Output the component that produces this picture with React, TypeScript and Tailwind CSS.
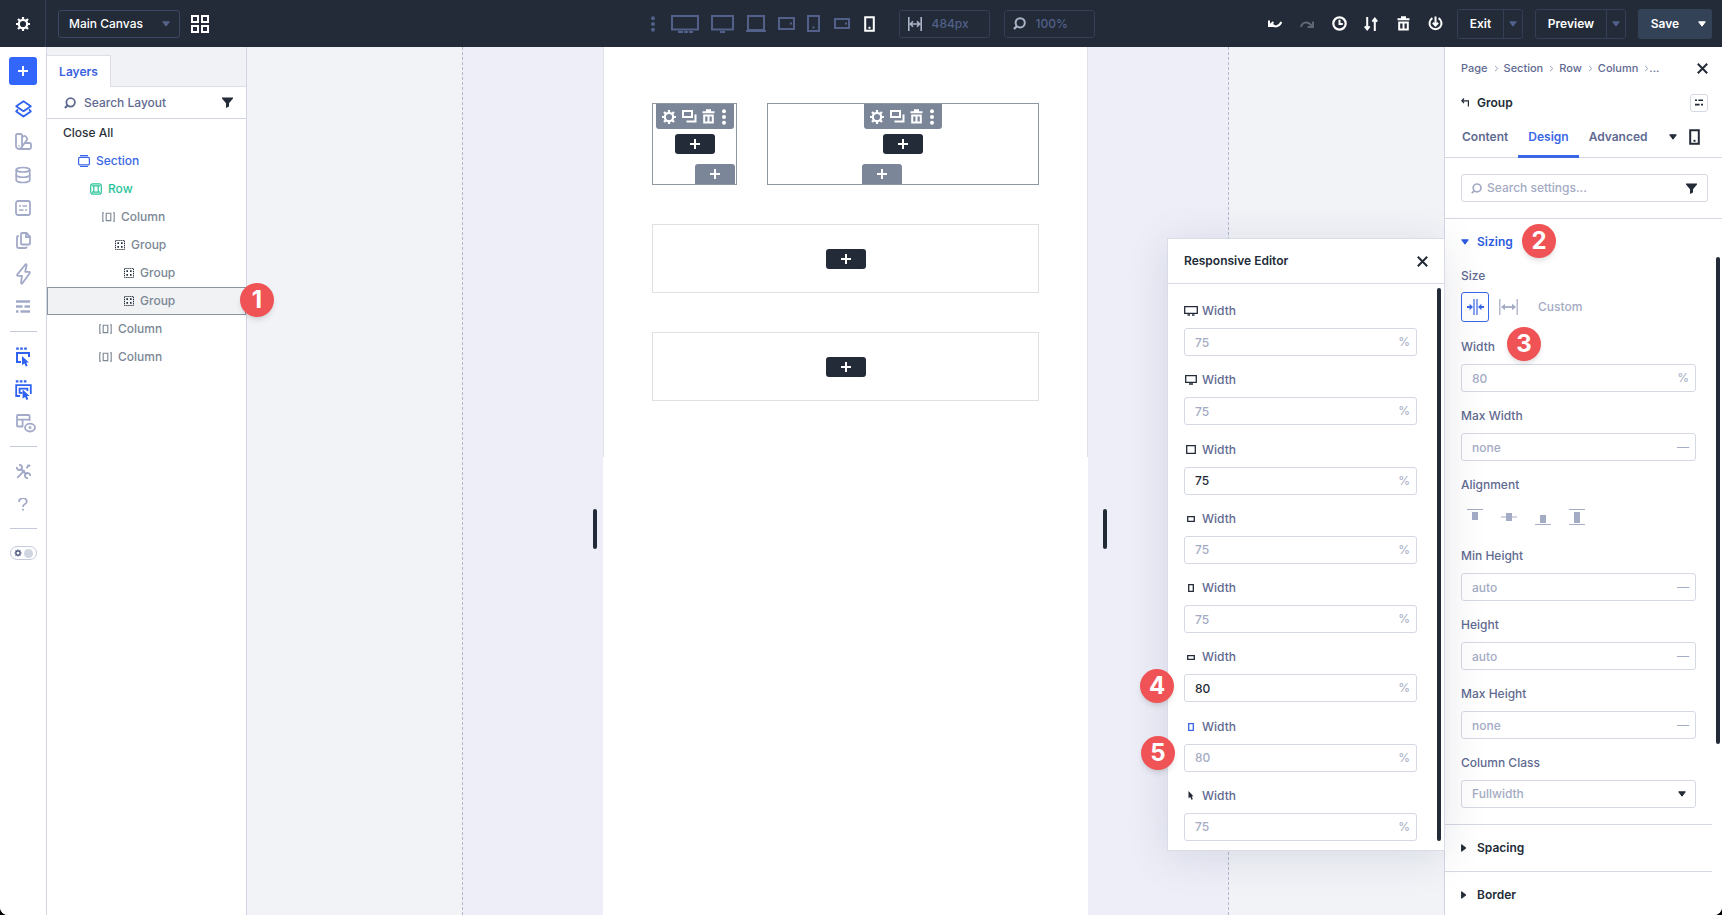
import React, { useState } from 'react';
import { Database } from 'lucide-react';

type DeviceKind = 'ultra' | 'desktop' | 'laptop' | 'tabletWide' | 'tablet' | 'phoneWide' | 'phone';

const devices: Record<DeviceKind, { w: number; h: number; body: React.ReactNode }> = {
  ultra: { w: 28, h: 18, body: <><path d="M1 1H27V14.5H1Z" /><path d="M7 17H12M13 17H17M18 17H22" /></> },
  desktop: { w: 23, h: 18, body: <><path d="M1 1H22V14.5H1Z" /><path d="M9 17H14" /></> },
  laptop: { w: 20, h: 17, body: <><path d="M2 1H18V15H2Z" /><path d="M0 16H20" /></> },
  tabletWide: { w: 17, h: 13, body: <><path d="M1 1H16V12H1Z" /><path d="M12 6.5H14" /></> },
  tablet: { w: 13, h: 17, body: <><path d="M1 1H12V16H1Z" /><path d="M5.5 12.5H7.5" /></> },
  phoneWide: { w: 16, h: 11, body: <><path d="M1 1H15V10H1Z" /><path d="M11 5.5H13" /></> },
  phone: { w: 11, h: 16, body: <><path d="M1.2 1.2H9.8V14.8H1.2Z" /><path d="M4.5 11.8H6.5" /></> },
};

const smallDevices: Record<DeviceKind, { w: number; h: number; d: string }> = {
  ultra: { w: 14, h: 10, d: 'M0.7 0.7H13.3V7.3H0.7ZM3.5 9H6M8 9H10.5' },
  desktop: { w: 12, h: 10, d: 'M0.7 0.7H11.3V7.3H0.7ZM4 9H8' },
  laptop: { w: 10, h: 9, d: 'M0.7 0.7H9.3V8.3H0.7Z' },
  tabletWide: { w: 8, h: 6, d: 'M0.7 0.7H7.3V5.3H0.7Z' },
  tablet: { w: 6, h: 8, d: 'M0.7 0.7H5.3V7.3H0.7Z' },
  phoneWide: { w: 8, h: 5, d: 'M0.7 0.7H7.3V4.3H0.7Z' },
  phone: { w: 6, h: 8, d: 'M0.7 0.7H5.3V7.3H0.7Z' },
};

function DeviceIcon({ kind }: { kind: DeviceKind }) {
  const { w, h, body } = devices[kind];
  return (
    <svg width={w} height={h} viewBox={`0 0 ${w} ${h}`} fill="none" stroke="currentColor" strokeWidth="2">
      {body}
    </svg>
  );
}

function SmallDeviceIcon({ kind }: { kind: DeviceKind }) {
  const { w, h, d } = smallDevices[kind];
  return (
    <svg width={w} height={h} viewBox={`0 0 ${w} ${h}`} fill="none" stroke="currentColor" strokeWidth="1.3">
      <path d={d} />
    </svg>
  );
}

function Gear({ size = 16 }: { size?: number }) {
  return (
    <svg width={size} height={size} viewBox="0 0 16 16" fill="none" stroke="currentColor" strokeWidth="2.2">
      <circle cx="8" cy="8" r="4.2" />
      <path d="M8 1V3.4M8 12.6V15M1 8H3.4M12.6 8H15M3 3L4.8 4.8M11.2 11.2L13 13M13 3L11.2 4.8M4.8 11.2L3 13" />
    </svg>
  );
}

function SearchIcon({ size = 13 }: { size?: number }) {
  return (
    <svg width={size} height={size} viewBox="0 0 13 13" fill="none" stroke="currentColor" strokeWidth="2">
      <circle cx="7.2" cy="5.8" r="4.6" />
      <path d="M4 9L1 12" strokeWidth="2.4" />
    </svg>
  );
}

function Trash() {
  return (
    <svg width="13" height="15" viewBox="0 0 13 15" fill="none" stroke="currentColor" strokeWidth="2">
      <path d="M0.5 3.2H12.5M4 1.2H9M2.2 6.5H10.8V13.4H2.2ZM6.5 6V13.6" />
    </svg>
  );
}

function Plus() {
  return (
    <svg width="10" height="10" viewBox="0 0 10 10" stroke="currentColor" strokeWidth="2">
      <path d="M5 0V10M0 5H10" />
    </svg>
  );
}

function Caret({ dir = 'down' }: { dir?: 'down' | 'right' }) {
  return (
    <svg width="8" height="8" viewBox="0 0 8 8" fill="currentColor" stroke="currentColor" strokeLinejoin="round">
      <path d={dir === 'down' ? 'M0.7 1.8H7.3L4 6.2Z' : 'M0.6 0.7V7.3L4.9 4Z'} />
    </svg>
  );
}

function Funnel() {
  return (
    <svg width="11" height="11" viewBox="0 0 11 11" fill="currentColor">
      <path d="M0 0.5H11V1.4L7 6.2V9.4L4 11V6.2L0 1.4Z" />
    </svg>
  );
}

function Cross() {
  return (
    <svg width="11" height="11" viewBox="0 0 11 11" stroke="currentColor" strokeWidth="2">
      <path d="M0.8 0.8L10.2 10.2M10.2 0.8L0.8 10.2" />
    </svg>
  );
}

function Kebab() {
  return (
    <svg width="4" height="16" viewBox="0 0 4 16" fill="currentColor">
      <circle cx="2" cy="2.2" r="2" />
      <circle cx="2" cy="8" r="2" />
      <circle cx="2" cy="13.8" r="2" />
    </svg>
  );
}

function Badge({ n, className }: { n: number; className: string }) {
  return (
    <span
      className={`absolute z-20 flex h-[34px] w-[34px] items-center justify-center rounded-full bg-[#f05355] text-2xl leading-none font-bold text-white shadow-md ${className}`}
    >
      {n}
    </span>
  );
}

const headerActions = [
  {
    label: 'Undo',
    tone: 'text-white',
    icon: (
      <svg width="14" height="12" viewBox="0 0 14 12" fill="none" stroke="currentColor" strokeWidth="2">
        <path d="M1 2.6V8H6.4M1.6 7.4L5.4 4M3.6 5.6C6.4 9.8 10.8 9.2 13.4 4" />
      </svg>
    ),
  },
  {
    label: 'Redo',
    tone: 'text-[#5d6672]',
    icon: (
      <svg width="14" height="12" viewBox="0 0 14 12" fill="none" stroke="currentColor" strokeWidth="2">
        <path d="M13 3.4V9H7.6M0.8 9C3 3.4 8 2.8 12.6 8.4" />
      </svg>
    ),
  },
  {
    label: 'History',
    tone: 'text-white',
    icon: (
      <svg width="15" height="15" viewBox="0 0 15 15" fill="none" stroke="currentColor" strokeWidth="2.2">
        <circle cx="7.5" cy="7.5" r="6.2" />
        <path d="M7.5 3.8V8H10.8" strokeWidth="2" />
      </svg>
    ),
  },
  {
    label: 'Portability',
    tone: 'text-white',
    icon: (
      <svg width="14" height="14" viewBox="0 0 14 14" fill="none" stroke="currentColor" strokeWidth="2">
        <path d="M3.2 0V12M0.8 9.4L3.2 12.4L5.6 9.4M10.8 14V2M8.4 4.6L10.8 1.6L13.2 4.6" />
      </svg>
    ),
  },
  { label: 'Clear Layout', tone: 'text-white', icon: <Trash /> },
  {
    label: 'Builder State',
    tone: 'text-white',
    icon: (
      <svg width="15" height="15" viewBox="0 0 15 15" fill="none" stroke="currentColor" strokeWidth="2">
        <path d="M4.4 2.2A6 6 0 1 0 10.6 2.2M7.5 0.5V9M4.9 6.8L7.5 9.6L10.1 6.8" />
      </svg>
    ),
  },
];

const headerDevices: DeviceKind[] = ['ultra', 'desktop', 'laptop', 'tabletWide', 'tablet'];

function Header() {
  return (
    <header className="flex h-[47px] shrink-0 items-center bg-[#222b37] text-xs text-white">
      <div className="flex flex-1 items-center">
        <button aria-label="Settings" className="flex h-[47px] w-[46px] items-center justify-center border-r border-[#333f55]">
          <Gear />
        </button>
        <div className="relative ml-3 w-[122px]">
          <select
            aria-label="Canvas"
            className="h-7 w-full appearance-none rounded-[3px] border border-[#3b4863] bg-transparent pl-[10px] font-medium"
          >
            <option>Main Canvas</option>
          </select>
          <span className="pointer-events-none absolute top-[10px] right-[10px] text-[#566387]">
            <Caret />
          </span>
        </div>
        <button aria-label="Canvas grid" className="ml-[11px]">
          <svg width="18" height="18" viewBox="0 0 18 18" fill="none" stroke="currentColor" strokeWidth="2">
            <path d="M1 1H7V7H1ZM11 1H17V7H11ZM1 11H7V17H1ZM11 11H17V17H11Z" />
          </svg>
        </button>
      </div>

      <div className="flex items-center pl-[33px] font-medium text-[#52608a]">
        <div className="flex items-center gap-3">
          <button aria-label="More breakpoints" className="mr-1">
            <Kebab />
          </button>
          {headerDevices.map(kind => (
            <button key={kind} aria-label={kind}>
              <DeviceIcon kind={kind} />
            </button>
          ))}
          <button aria-label="phoneWide" className="ml-0.5">
            <DeviceIcon kind="phoneWide" />
          </button>
          <button aria-label="phone" className="ml-0.5 text-white">
            <DeviceIcon kind="phone" />
          </button>
        </div>
        <label className="ml-6 flex h-7 w-[91px] items-center gap-2.5 rounded-[3px] border border-[#333f55] pl-2">
          <svg className="text-[#a9b4c8]" width="14" height="14" viewBox="0 0 14 14" fill="none" stroke="currentColor" strokeWidth="1.6">
            <path d="M0.8 0V14M13.2 0V14M2.4 7H11.6M5 4.2L2.4 7L5 9.8M9 4.2L11.6 7L9 9.8" />
          </svg>
          <input aria-label="Canvas width" defaultValue="484px" className="w-[52px] bg-transparent outline-none" />
        </label>
        <label className="ml-[14px] flex h-7 w-[91px] items-center gap-2.5 rounded-[3px] border border-[#333f55] pl-2">
          <span className="text-[#a9b4c8]">
            <SearchIcon />
          </span>
          <input aria-label="Zoom" defaultValue="100%" className="w-[52px] bg-transparent outline-none" />
        </label>
      </div>

      <div className="flex flex-1 items-center justify-end pr-[10px] font-semibold">
        <div className="flex gap-4">
          {headerActions.map(action => (
            <button key={action.label} aria-label={action.label} className={`flex h-4 w-4 items-center justify-center ${action.tone}`}>
              {action.icon}
            </button>
          ))}
        </div>
        <div className="ml-[14px] flex h-[30px] w-[66px] rounded-[3px] border border-[#333f55]">
          <button className="flex-1">Exit</button>
          <button aria-label="Exit options" className="flex w-[19px] items-center justify-center border-l border-[#333f55] text-[#52608a]">
            <Caret />
          </button>
        </div>
        <div className="ml-3 flex h-[30px] w-[91px] rounded-[3px] border border-[#333f55]">
          <button className="flex-1">Preview</button>
          <button aria-label="Preview options" className="flex w-[19px] items-center justify-center border-l border-[#333f55] text-[#52608a]">
            <Caret />
          </button>
        </div>
        <div className="ml-3 flex h-[30px] w-[74px] rounded-[3px] bg-[#344258]">
          <button className="flex-1">Save</button>
          <button aria-label="Save options" className="flex w-5 items-center justify-center">
            <Caret />
          </button>
        </div>
      </div>
    </header>
  );
}

function RailButton({ label, tone = 'text-[#a3aac8]', children }: { label: string; tone?: string; children: React.ReactNode }) {
  return (
    <button aria-label={label} className={`flex h-[33px] w-full items-center justify-center ${tone}`}>
      {children}
    </button>
  );
}

function Rail() {
  return (
    <nav className="flex w-[47px] shrink-0 flex-col items-center border-r border-[#d3d5e4] bg-white pt-[10px]">
      <button aria-label="Add" className="mb-[7px] flex h-7 w-7 items-center justify-center rounded-[3px] bg-[#3366fa] text-white">
        <Plus />
      </button>
      <RailButton label="Layers" tone="text-[#2f62ee]">
        <svg width="17" height="18" viewBox="0 0 17 18" fill="none" stroke="currentColor" strokeWidth="1.8" strokeLinejoin="round">
          <path d="M8.5 1.2L15.8 6.2L8.5 11.2L1.2 6.2Z" />
          <path d="M3 9.4L1.2 11.4L8.5 16.6L15.8 11.4L14 9.4" />
        </svg>
      </RailButton>
      <RailButton label="Presets">
        <svg width="17" height="17" viewBox="0 0 17 17" fill="none" stroke="currentColor" strokeWidth="1.8">
          <path d="M1 2.5Q1 1 2.5 1H5.5Q7 1 7 2.5V13A3 3 0 0 1 1 13ZM7 4.6L8.4 3.2Q9.6 2.4 10.6 3.4L12 5Q12.8 6 11.8 7L5.8 15.2M9.8 10H14.4Q16 10 16 11.5V14.5Q16 16 14.4 16H4" />
          <path d="M3.5 12.9H4.5" />
        </svg>
      </RailButton>
      <RailButton label="Database">
        <Database size={18} strokeWidth={2.3} />
      </RailButton>
      <RailButton label="Variables">
        <svg width="16" height="16" viewBox="0 0 16 16" fill="none" stroke="currentColor" strokeWidth="1.8">
          <rect x="1" y="1" width="14" height="14" rx="2" />
          <path d="M4 6H6M7.5 6H12M4 10H8.5M10 10H12" strokeWidth="1.6" />
        </svg>
      </RailButton>
      <RailButton label="Pages">
        <svg width="15" height="17" viewBox="0 0 15 17" fill="none" stroke="currentColor" strokeWidth="1.8">
          <path d="M5 2Q5 1 6 1H10.5L14 4.5V11.5Q14 12.5 13 12.5H6Q5 12.5 5 11.5ZM10 1V5H14M2.8 4Q1 4 1 5.5V14.5Q1 16 2.5 16H9.5Q10.8 16 10.8 14.5" />
        </svg>
      </RailButton>
      <RailButton label="Interactions">
        <svg width="15" height="22" viewBox="0 0 15 22" fill="none" stroke="currentColor" strokeWidth="1.8" strokeLinejoin="round">
          <path d="M9.6 1.2L1.2 11.6Q0.8 12.8 2 12.8H6L5 19.6Q5.2 21.2 6.4 20.2L13.8 10Q14.2 8.8 13 8.8H9.2L10.6 2.2Q10.6 1 9.6 1.2Z" />
        </svg>
      </RailButton>
      <RailButton label="Wireframe">
        <svg width="14" height="13" viewBox="0 0 14 13" fill="none" stroke="currentColor" strokeWidth="2.6">
          <path d="M0 1.5H14M0 6.5H6.5M8.5 6.5H14M0 11.5H2.5M4.5 11.5H14" />
        </svg>
      </RailButton>
      <hr className="my-2 w-[27px] border-[#c5c9dc]" />
      <RailButton label="Click mode" tone="text-[#2f62ee]">
        <svg width="16" height="20" viewBox="0 0 16 20" fill="none" stroke="currentColor" strokeWidth="2">
          <path d="M6 15H2V6H14V10" />
          <path d="M1.2 1.6H3.8M5.2 1.6H7.8M9.2 1.6H11.8" strokeWidth="2.4" />
          <path d="M7 9L14 15.4H11.4L12.6 19L10.8 19.6L9.5 16.4L7 18Z" fill="currentColor" stroke="none" />
        </svg>
      </RailButton>
      <RailButton label="Group mode" tone="text-[#2f62ee]">
        <svg width="17" height="20" viewBox="0 0 17 20" fill="none" stroke="currentColor" strokeWidth="1.8">
          <path d="M5 16H1.2V5.2H15.8V14M7.5 12.8H4.6V8.6H12.4V11" />
          <path d="M0.8 1.4H3.4M4.8 1.4H7.4M8.8 1.4H11.4" strokeWidth="2.4" />
          <path d="M7.6 9.6L14.6 16H12L13.2 19.2L11.4 20L10.1 17L7.6 18.6Z" fill="currentColor" stroke="none" />
        </svg>
      </RailButton>
      <RailButton label="Grid view">
        <svg className="mt-0.5 ml-[5px]" width="20" height="19" viewBox="0 0 20 19" fill="none" stroke="currentColor" strokeWidth="1.8">
          <path d="M13.6 7V2Q13.6 1 12.6 1H2Q1 1 1 2V11.5Q1 12.5 2 12.5H7M1 5.6H13.6M6.6 5.6V12.5" />
          <ellipse cx="14" cy="13.6" rx="5" ry="3.9" />
          <circle cx="14" cy="13.6" r="0.6" />
        </svg>
      </RailButton>
      <hr className="mt-[7px] mb-2 w-[27px] border-[#c5c9dc]" />
      <RailButton label="Tools">
        <svg width="15" height="15" viewBox="0 0 15 15" fill="none" stroke="currentColor" strokeWidth="1.9">
          <path d="M1.2 13.8L8.6 6.4M12.4 2.6L14 0.8M10.6 4.4L12.6 0.8" />
          <path d="M4.6 4.6L10.6 10.6" strokeWidth="2.2" />
          <path d="M3 0.9A2.6 2.6 0 1 1 0.9 3M12 14.1A2.6 2.6 0 1 1 14.1 12" />
        </svg>
      </RailButton>
      <RailButton label="Help">
        <svg width="10" height="13" viewBox="0 0 10 13" fill="none" stroke="currentColor" strokeWidth="1.8">
          <path d="M1.2 4A3.8 3.2 0 1 1 7 6Q5 7 5 9M5 10.8V12.6" />
        </svg>
      </RailButton>
      <hr className="mt-[7px] mb-[17px] w-[27px] border-[#c5c9dc]" />
      <button
        aria-label="Theme"
        className="flex h-[14px] w-[27px] items-center justify-between rounded-full border border-[#c5c9dc] px-[3px] text-[#3f4a78]"
      >
        <Gear size={8} />
        <span className="h-[9px] w-[9px] rounded-full bg-[#d0d5e2]" />
      </button>
    </nav>
  );
}

const treeIcons = {
  section: (
    <svg width="12" height="12" viewBox="0 0 12 12" fill="none" stroke="currentColor" strokeWidth="1.2">
      <rect x="0.6" y="2.4" width="10.8" height="7.4" rx="1" />
      <path d="M2 0.6H10M2 11.5H10" />
    </svg>
  ),
  row: (
    <svg width="12" height="12" viewBox="0 0 12 12" fill="none" stroke="currentColor" strokeWidth="1.2">
      <rect x="0.7" y="0.9" width="10.6" height="10.2" rx="2" />
      <path d="M3.8 2.6V9.4M8.2 2.6V9.4M2 2.8H10M2 9.2H10" />
    </svg>
  ),
  column: (
    <svg width="13" height="10" viewBox="0 0 13 10" fill="none" stroke="currentColor" strokeWidth="1.1">
      <path d="M4.2 1.2H8.8V8.6H4.2ZM2 0.8H0.8V9.2H2M11 0.8H12.2V9.2H11" />
    </svg>
  ),
  group: (
    <svg width="10" height="10" viewBox="0 0 10 10" fill="none" stroke="#222b37">
      <path d="M0.5 0.5H9.5V9.5H0.5Z" strokeDasharray="1.2 0.7" />
      <path d="M2.4 3.2H4M6 3.2H7.6M2.4 6.8H4M6 6.8H7.6" strokeWidth="1.8" />
    </svg>
  ),
};

const layers: { name: string; icon: keyof typeof treeIcons; className: string; selected?: boolean }[] = [
  { name: 'Section', icon: 'section', className: 'pl-[31px] text-[#3a67e6]' },
  { name: 'Row', icon: 'row', className: 'pl-[43px] text-[#27c498]' },
  { name: 'Column', icon: 'column', className: 'pl-[55px] text-[#7b8794]' },
  { name: 'Group', icon: 'group', className: 'pl-[68px] text-[#7b8794]' },
  { name: 'Group', icon: 'group', className: 'pl-[77px] text-[#7b8794]' },
  { name: 'Group', icon: 'group', className: 'pl-[77px] text-[#7b8794]', selected: true },
  { name: 'Column', icon: 'column', className: 'pl-[52px] text-[#7b8794]' },
  { name: 'Column', icon: 'column', className: 'pl-[52px] text-[#7b8794]' },
];

function LayersPanel() {
  return (
    <section className="relative z-20 flex w-[200px] shrink-0 flex-col border-r border-[#d3d5e4] bg-white text-xs font-medium">
      <div className="flex h-10 items-end border-b border-[#dcdee8] bg-[#f1f2f6]">
        <button className="-mb-px h-8 w-16 border-t border-r border-[#dcdee8] bg-white font-semibold text-[#3a62e0]">Layers</button>
      </div>
      <label className="flex h-8 items-center border-b border-[#d3d5e4] pr-[13px] pl-[17px] text-[#5f6a91]">
        <SearchIcon size={12} />
        <input
          aria-label="Search Layout"
          placeholder="Search Layout"
          className="ml-2 min-w-0 flex-1 bg-transparent outline-none placeholder:text-[#5f6a91]"
        />
        <span className="text-[#222b37]">
          <Funnel />
        </span>
      </label>
      <button className="h-7 pl-4 text-left text-[#2b323c]">Close All</button>
      <ul>
        {layers.map((layer, i) => (
          <li key={i} className={layer.selected ? 'relative bg-[#f1f2f4] outline-1 -outline-offset-1 outline-[#8b96a3]' : ''}>
            <button className={`flex h-7 w-full items-center gap-[6px] ${layer.className}`}>
              {treeIcons[layer.icon]}
              {layer.name}
            </button>
            {layer.selected && <Badge n={1} className="-top-1 left-[193px]" />}
          </li>
        ))}
      </ul>
    </section>
  );
}

function AddButton({ className = 'rounded-[3px] bg-[#222b37]' }: { className?: string }) {
  return (
    <button aria-label="Add" className={`flex h-5 w-10 items-center justify-center text-white ${className}`}>
      <Plus />
    </button>
  );
}

function GroupBox({ className, addClassName }: { className: string; addClassName: string }) {
  return (
    <div className={`relative flex h-[82px] flex-col items-center border border-[#8f97a3] ${className}`}>
      <div className="flex h-[25px] w-[78px] shrink-0 items-center gap-[5px] rounded-b-[3px] bg-[#7b8799] pl-[5px] text-white">
        <button aria-label="Group settings"><Gear /></button>
        <button aria-label="Duplicate">
          <svg width="15" height="13" viewBox="0 0 15 13" fill="none" stroke="currentColor" strokeWidth="2">
            <path d="M1 1H10V7H1ZM13.5 4.5V11.5H4.5" />
          </svg>
        </button>
        <button aria-label="Delete"><Trash /></button>
        <button aria-label="More" className="ml-0.5"><Kebab /></button>
      </div>
      <div className="mt-[5px]">
        <AddButton />
      </div>
      <div className={`absolute bottom-0 ${addClassName}`}>
        <AddButton className="rounded-t-[3px] bg-[#7b8799]" />
      </div>
    </div>
  );
}

function Canvas() {
  return (
    <div className="flex flex-1 justify-center overflow-hidden bg-[#f1f3f7]">
      <div className="flex w-[767px] justify-center border-x border-dashed border-[#b4b8c8] bg-[#edeef7]">
        <div className="relative w-[485px] bg-white">
          <div className="flex h-[410px] flex-col border-x border-[#dfe0e8] px-12 pt-14">
            <div className="flex gap-[30px]">
              <GroupBox className="w-[85px] shrink-0" addClassName="right-px" />
              <GroupBox className="flex-1" addClassName="left-[94px]" />
            </div>
            <div className="mt-[39px] flex h-[69px] items-center justify-center border border-[#dfe0e4]">
              <AddButton />
            </div>
            <div className="mt-[39px] flex h-[69px] items-center justify-center border border-[#dfe0e4]">
              <AddButton />
            </div>
          </div>
          <span className="absolute top-[462px] -left-[10px] h-10 w-1 rounded-full bg-[#222b37]" />
          <span className="absolute top-[462px] -right-[19px] h-10 w-1 rounded-full bg-[#222b37]" />
        </div>
      </div>
    </div>
  );
}

const inputClass =
  'h-7 w-full rounded-[3px] border border-[#d5d9e4] bg-white pr-8 pl-[10px] text-xs font-medium text-[#222b37] outline-none placeholder:text-[#a4abc4]';

const breakpoints: { kind: DeviceKind | 'hover'; value?: string; placeholder?: string }[] = [
  { kind: 'ultra', placeholder: '75' },
  { kind: 'desktop', placeholder: '75' },
  { kind: 'laptop', value: '75' },
  { kind: 'tabletWide', placeholder: '75' },
  { kind: 'tablet', placeholder: '75' },
  { kind: 'phoneWide', value: '80' },
  { kind: 'phone', placeholder: '80' },
  { kind: 'hover', placeholder: '75' },
];

function ResponsiveEditor() {
  return (
    <div className="absolute top-[191px] -right-px z-20 flex h-[613px] w-[278px] flex-col border border-[#d9dbe6] bg-white shadow-[0_6px_40px_rgba(43,50,90,0.12)]">
      <div className="flex h-[45px] shrink-0 items-center justify-between border-b border-[#d9dbe6] pr-4 pl-4 text-[#222b37]">
        <h2 className="text-xs font-semibold">Responsive Editor</h2>
        <button aria-label="Close editor"><Cross /></button>
      </div>
      <div className="flex flex-1 pt-1 pr-[3px] pb-[9px]">
        <div className="flex flex-1 flex-col justify-between pt-[14px] pr-5 pl-4">
          {breakpoints.map(({ kind, value, placeholder }) => (
            <div key={kind} className="relative">
              <label htmlFor={`width-${kind}`} className="flex h-[18px] items-center gap-1 text-xs font-medium text-[#5f6a91]">
                <span className={`flex w-[14px] justify-center ${kind === 'phone' ? 'text-[#3a67e6]' : 'text-[#222b37]'}`}>
                  {kind === 'hover' ? (
                    <svg width="6" height="9" viewBox="0 0 6 9" fill="currentColor">
                      <path d="M0.5 0L5.5 5.2H3.8L4.8 8.2L3.4 8.8L2.3 5.9L0.5 7.2Z" />
                    </svg>
                  ) : (
                    <SmallDeviceIcon kind={kind} />
                  )}
                </span>
                Width
              </label>
              <div className="relative mt-2">
                <input id={`width-${kind}`} defaultValue={value} placeholder={placeholder} className={inputClass} />
                <span className="absolute top-[6px] right-[7px] text-xs text-[#a4abc4]">%</span>
              </div>
              {kind === 'phoneWide' && <Badge n={4} className="top-[21px] -left-[44px]" />}
              {kind === 'phone' && <Badge n={5} className="top-[18px] -left-[43px]" />}
            </div>
          ))}
        </div>
        <div className="w-1 rounded-full bg-[#222b37]" />
      </div>
    </div>
  );
}

function Field({ label, placeholder, unit, badge }: { label: string; placeholder: string; unit: string; badge?: React.ReactNode }) {
  const id = label.toLowerCase().replace(' ', '-');
  return (
    <div className="relative">
      <label htmlFor={id} className="block leading-[18px]">{label}</label>
      <div className="relative mt-2">
        <input id={id} placeholder={placeholder} className={inputClass} />
        <span className="absolute top-[6px] right-[7px] font-normal text-[#a4abc4]">{unit}</span>
      </div>
      {badge}
    </div>
  );
}

const alignments = [
  { label: 'Start', lines: 'M0 0.5H16', block: 'M5 3H11V11H5Z' },
  { label: 'Center', lines: 'M0 8H16', block: 'M5 4H11V12H5Z' },
  { label: 'End', lines: 'M0 15.5H16', block: 'M5 6H11V14H5Z' },
  { label: 'Stretch', lines: 'M0 0.5H16M0 15.5H16', block: 'M5 3H11V14H5Z' },
];

const crumbs = ['Page', 'Section', 'Row', 'Column'];
const tabs = ['Content', 'Design', 'Advanced'];

function SettingsPanel() {
  const [tab, setTab] = useState('Design');

  return (
    <aside className="relative flex w-[278px] shrink-0 flex-col overflow-hidden border-l border-[#d3d5e4] bg-white text-xs font-medium text-[#5f6a91]">
      <div className="flex h-[42px] shrink-0 items-center justify-between pr-[14px] pl-4">
        <div className="flex items-center text-[11px]">
          {crumbs.map(crumb => (
            <React.Fragment key={crumb}>
              <a href="#">{crumb}</a>
              <svg className="mr-[5px] ml-[6px]" width="5" height="7" viewBox="0 0 5 7" fill="none" stroke="#9aa2bd">
                <path d="M1 0.8L3.8 3.5L1 6.2" />
              </svg>
            </React.Fragment>
          ))}
          <span className="-ml-[5px]">...</span>
        </div>
        <button aria-label="Close" className="text-[#222b37]"><Cross /></button>
      </div>
      <div className="flex h-[27px] shrink-0 items-center pr-[14px] pl-4 text-[#222b37]">
        <svg width="8" height="9" viewBox="0 0 8 9" fill="none" stroke="currentColor" strokeWidth="1.2">
          <path d="M3 0.5L0.8 2.8L3 5M0.8 2.8H7.4V8.5" />
        </svg>
        <h1 className="ml-2 font-semibold">Group</h1>
        <button aria-label="Presets" className="ml-auto flex h-[18px] w-[18px] items-center justify-center rounded-[3px] border border-[#d5d9e4]">
          <svg width="8" height="7" viewBox="0 0 8 7" stroke="currentColor" strokeWidth="1.6">
            <path d="M0 1.2H2M3.4 1.2H8M0 5.6H4.6M6 5.6H8" />
          </svg>
        </button>
      </div>
      <div className="flex h-[42px] shrink-0 items-stretch border-b border-[#d5d9e4] pt-[3px] pr-[22px] pl-[7px] font-semibold">
        {tabs.map(name => (
          <button
            key={name}
            onClick={() => setTab(name)}
            className={`-mb-px border-b-3 px-[10px] ${tab === name ? 'border-[#3a67e6] text-[#3a67e6]' : 'border-transparent'}`}
          >
            {name}
          </button>
        ))}
        <button aria-label="Switch device" className="ml-auto flex items-center gap-3 pb-[3px] text-[#222b37]">
          <Caret />
          <DeviceIcon kind="phone" />
        </button>
      </div>
      <div className="h-[61px] shrink-0 border-b border-[#d5d9e4] pt-4 pr-[14px] pl-4">
        <label className="flex h-7 items-center rounded-[3px] border border-[#d5d9e4] pr-[10px] pl-[9px] text-[#a4abc4]">
          <SearchIcon size={11} />
          <input
            aria-label="Search settings"
            placeholder="Search settings..."
            className="ml-[5px] min-w-0 flex-1 bg-transparent outline-none placeholder:text-[#a4abc4]"
          />
          <span className="text-[#222b37]">
            <Funnel />
          </span>
        </label>
      </div>

      <div className="mr-[10px] shrink-0 pr-4 pb-4 pl-4">
        <button className="relative flex h-[45px] items-center gap-2 font-semibold text-[#2c5be0]">
          <Caret />
          Sizing
          <Badge n={2} className="top-[5px] left-[61px]" />
        </button>
        <div className="mt-[3px] leading-[18px]">Size</div>
        <div className="mt-[7px] flex items-center">
          <button aria-label="Fit size" className="flex h-[30px] w-7 items-center justify-center rounded-[3px] border border-[#3a67e6] text-[#3a67e6]">
            <svg width="17" height="16" viewBox="0 0 17 16" fill="none" stroke="currentColor" strokeWidth="1.2">
              <path d="M7 0V16M10 0V16" />
              <path d="M0 8H4M13 8H17" strokeWidth="1.8" />
              <path d="M2.6 4.8L6 8L2.6 11.2ZM14.4 4.8L11 8L14.4 11.2Z" fill="currentColor" stroke="none" />
            </svg>
          </button>
          <button aria-label="Fill size" className="ml-[10px] text-[#a4abc4]">
            <svg width="19" height="16" viewBox="0 0 19 16" fill="none" stroke="currentColor" strokeWidth="1.2">
              <path d="M0.8 0V16M18.2 0V16" />
              <path d="M4 8H15" strokeWidth="1.8" />
              <path d="M6 4.8L2 8L6 11.2ZM13 4.8L17 8L13 11.2Z" fill="currentColor" stroke="none" />
            </svg>
          </button>
          <button className="ml-5 text-[#a4abc4]">Custom</button>
        </div>
        <div className="mt-4 flex flex-col gap-[15px]">
          <Field label="Width" placeholder="80" unit="%" badge={<Badge n={3} className="-top-[11px] left-[46px]" />} />
          <Field label="Max Width" placeholder="none" unit="—" />
          <div>
            <div className="leading-[18px]">Alignment</div>
            <div className="mt-2 flex h-[30px] items-center gap-[18px] pl-[6px] text-[#a4abc4]">
              {alignments.map(item => (
                <button key={item.label} aria-label={item.label}>
                  <svg width="16" height="16" viewBox="0 0 16 16">
                    <path d={item.lines} stroke="currentColor" />
                    <path d={item.block} fill="currentColor" />
                  </svg>
                </button>
              ))}
            </div>
          </div>
          <Field label="Min Height" placeholder="auto" unit="—" />
          <Field label="Height" placeholder="auto" unit="—" />
          <Field label="Max Height" placeholder="none" unit="—" />
          <div>
            <label htmlFor="column-class" className="block leading-[18px]">Column Class</label>
            <div className="relative mt-2">
              <select
                id="column-class"
                className="h-7 w-full appearance-none rounded-[3px] border border-[#d5d9e4] bg-white pl-[10px] text-[#a4abc4] outline-none"
              >
                <option>Fullwidth</option>
              </select>
              <span className="pointer-events-none absolute top-[10px] right-[10px] text-[#222b37]">
                <Caret />
              </span>
            </div>
          </div>
        </div>
      </div>
      {['Spacing', 'Border'].map(name => (
        <button
          key={name}
          className="mr-[10px] flex h-[47px] shrink-0 items-center gap-2 border-t border-[#d5d9e4] pl-4 font-semibold text-[#222b37]"
        >
          <Caret dir="right" />
          {name}
        </button>
      ))}
      <div className="absolute top-[210px] right-[2px] h-[487px] w-1 rounded-full bg-[#222b37]" />
    </aside>
  );
}

export default function App() {
  return (
    <div className="h-screen bg-black font-['Inter',sans-serif]">
      <div className="flex h-full flex-col overflow-hidden rounded-b-lg bg-white">
        <Header />
        <div className="flex min-h-0 flex-1">
          <Rail />
          <LayersPanel />
          <main className="relative z-10 flex min-w-0 flex-1">
            <Canvas />
            <ResponsiveEditor />
          </main>
          <SettingsPanel />
        </div>
      </div>
    </div>
  );
}
